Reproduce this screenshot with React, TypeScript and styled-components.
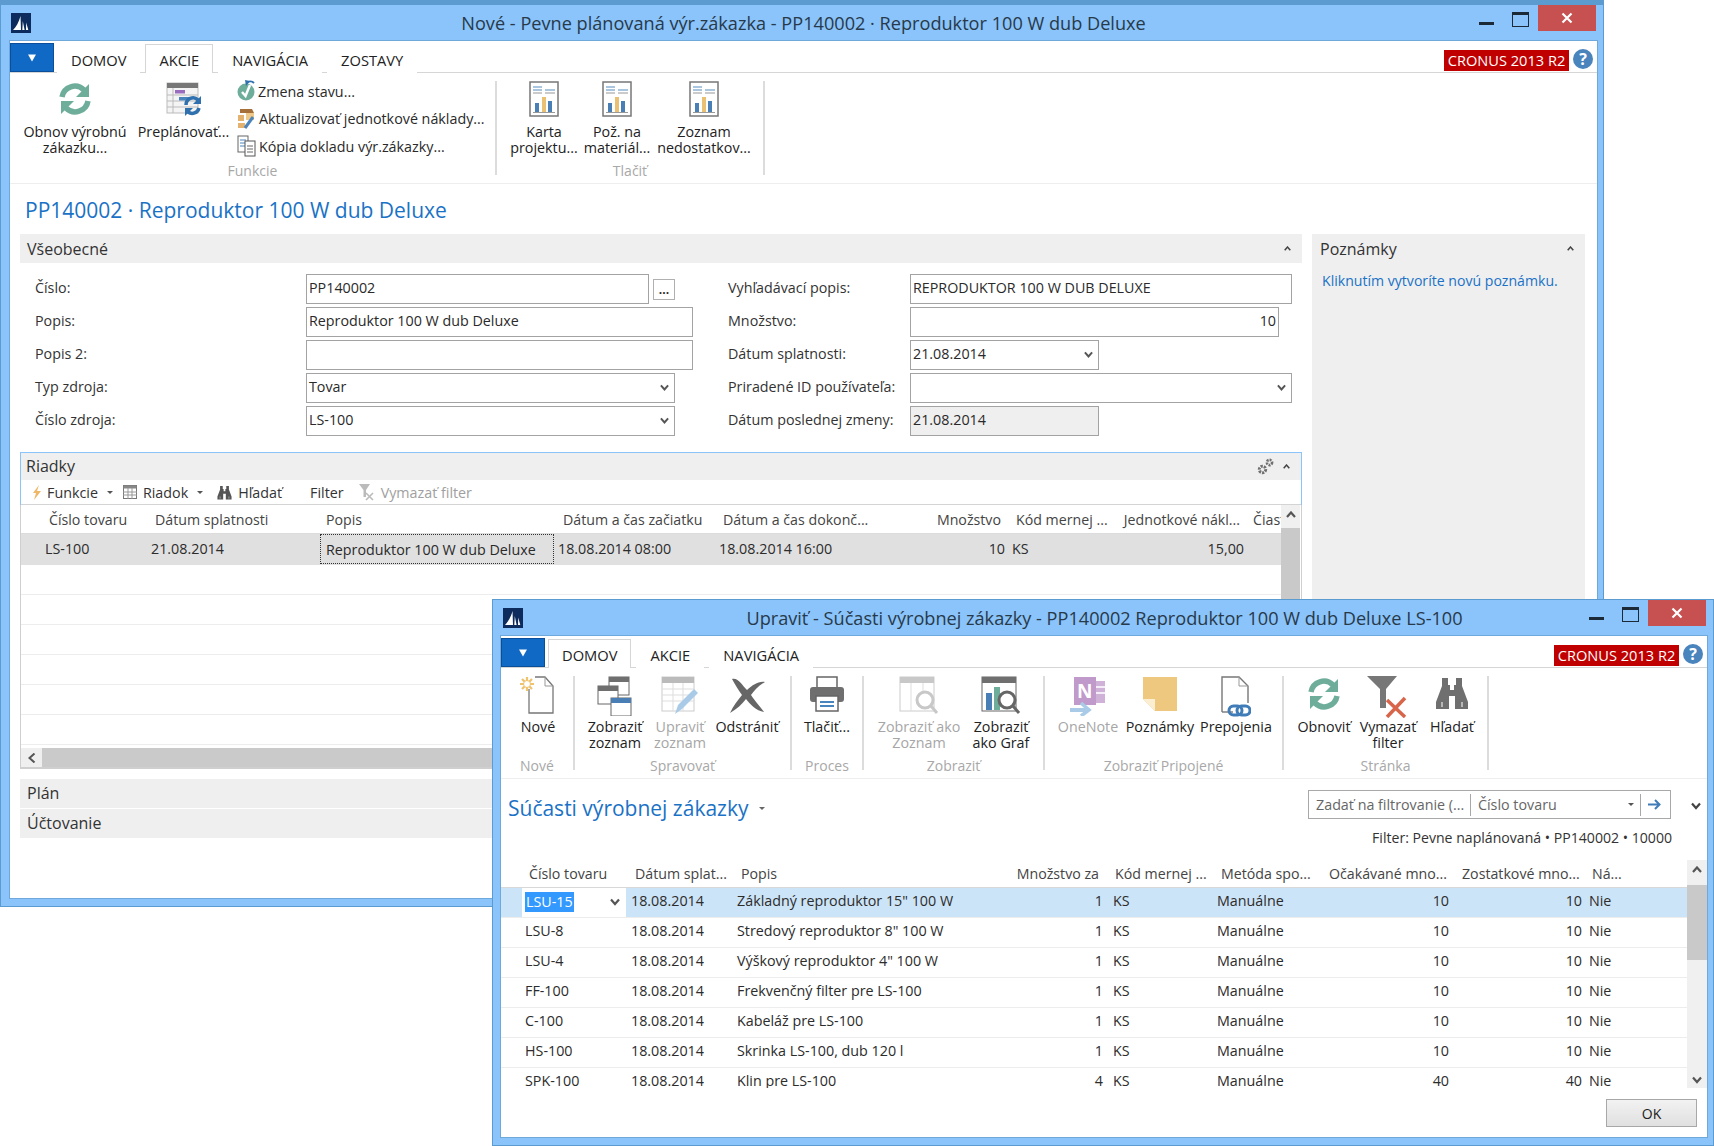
import React from "react";
import styled, { createGlobalStyle } from "styled-components";

const Global = createGlobalStyle`
  html, body { margin: 0; padding: 0; background: #fff; }
  body { font-family: "Open Sans", "Noto Sans", "Liberation Sans", sans-serif; font-size: 14px; color: #2a2a2a; }
`;

const FRAME = "#8ac4fa";
const EDGE = "#5b9bd0";
const LINK = "#1a72c6";
const PANEL = "#efefef";
const TEXT = "14.3px";

const Desktop = styled.div`
  position: relative;
  width: 1714px;
  height: 1146px;
  overflow: hidden;
  background: #fff;
`;

const Window = styled.div<{ $x: number; $y: number; $w: number; $h: number; $top: number }>`
  position: absolute;
  left: ${(p) => p.$x}px;
  top: ${(p) => p.$y}px;
  width: ${(p) => p.$w}px;
  height: ${(p) => p.$h}px;
  box-sizing: border-box;
  background: ${FRAME};
  border: 1px solid ${EDGE};
  border-top-width: ${(p) => p.$top}px;
  display: flex;
  flex-direction: column;
  padding-bottom: 8px;
`;

const TitleBar = styled.div`
  flex: none;
  height: 36px;
  display: grid;
  grid-template-columns: 1fr auto 1fr;
  padding: 0 7px 0 10px;
`;

const TitleLeft = styled.div`
  padding-top: 8px;
`;

const TitleText = styled.div`
  font-size: 18.15px;
  line-height: 36px;
  color: #28394a;
  white-space: nowrap;
`;

const Controls = styled.div`
  display: flex;
  justify-content: flex-end;
  align-items: flex-start;
`;

const MinBtn = styled.div`
  width: 15px;
  height: 3px;
  margin: 17px 18px 0 0;
  background: #1c2a38;
`;

const MaxBtn = styled.div`
  width: 15px;
  height: 11px;
  margin: 7px 9px 0 0;
  border: 1.5px solid #1c2a38;
  border-top-width: 3px;
`;

const CloseBtn = styled.div`
  width: 58px;
  height: 26px;
  background: #c75050;
  color: #fff;
  display: flex;
  align-items: center;
  justify-content: center;
`;

const Body = styled.div<{ $ml: number; $mr: number }>`
  flex: 1;
  min-height: 0;
  margin: 0 ${(p) => p.$mr}px 0 ${(p) => p.$ml}px;
  background: #fff;
  outline: 1px solid #6fa8da;
  display: flex;
  flex-direction: column;
  overflow: hidden;
`;

const TabRow = styled.div`
  flex: none;
  height: 32px;
  box-sizing: border-box;
  border-bottom: 1.5px solid #d6d6d6;
  display: flex;
  align-items: flex-end;
  gap: 5px;
  padding-right: 4px;
`;

const MenuButton = styled.div`
  width: 44px;
  height: 29px;
  margin-right: -2px;
  box-sizing: border-box;
  background: #1069c4;
  border: 1px solid #0b4f9a;
  display: flex;
  align-items: center;
  justify-content: center;
`;

const Tab = styled.div<{ $active?: boolean }>`
  height: 29px;
  box-sizing: border-box;
  padding: 0 13px;
  font-size: 14.7px;
  line-height: 30px;
  color: #222;
  background: #fff;
  border: 1px solid ${(p) => (p.$active ? "#d6d6d6" : "transparent")};
  border-bottom: 0;
  margin-bottom: -1px;
  white-space: nowrap;
`;

const Badge = styled.div`
  margin-left: auto;
  width: 125px;
  height: 21px;
  margin-bottom: 1px;
  background: #c00000;
  color: #fff;
  font-size: 14.6px;
  line-height: 21px;
  text-align: center;
  white-space: nowrap;
`;

const HelpDot = styled.div`
  width: 20px;
  height: 20px;
  margin: 0 0 3px -1px;
  border-radius: 50%;
  background: #4a84bd;
  color: #fff;
  font-weight: 700;
  font-size: 16px;
  line-height: 20px;
  text-align: center;
`;

const Ribbon = styled.div`
  flex: none;
  height: 111px;
  box-sizing: border-box;
  border-bottom: 1px solid #eeeeee;
  padding-top: 8px;
  display: flex;
  align-items: flex-start;
`;

const Group = styled.div<{ $w: number }>`
  width: ${(p) => p.$w}px;
  flex: none;
  display: flex;
  flex-direction: column;
  align-items: stretch;
`;

const GroupItems = styled.div<{ $pl?: number }>`
  height: 76px;
  display: flex;
  padding-left: ${(p) => p.$pl ?? 0}px;
`;

const GroupName = styled.div`
  margin-top: 6px;
  font-size: 14px;
  line-height: 16px;
  color: #a8a8a8;
  text-align: center;
`;

const Sep = styled.div`
  flex: none;
  width: 2px;
  height: 94px;
  background: #dcdcdc;
`;

const Item = styled.div<{ $w: number; $dim?: boolean }>`
  width: ${(p) => p.$w}px;
  flex: none;
  display: flex;
  flex-direction: column;
  align-items: center;
  color: ${(p) => (p.$dim ? "#a6a6a6" : "#222")};
`;

const ItemIcon = styled.div`
  height: 43px;
  display: flex;
  align-items: flex-start;
  justify-content: center;
`;

const ItemLabel = styled.div`
  font-size: ${TEXT};
  line-height: 16px;
  text-align: center;
  white-space: pre-line;
`;

const ActionStack = styled.div`
  display: flex;
  flex-direction: column;
  gap: 7.5px;
`;

const Action = styled.div`
  height: 20px;
  display: flex;
  align-items: center;
  gap: 2px;
  font-size: ${TEXT};
  white-space: nowrap;
`;

const PageTitle = styled.div<{ $pl: number }>`
  flex: none;
  height: 50px;
  box-sizing: border-box;
  padding: 1px 0 0 ${(p) => p.$pl}px;
  display: flex;
  align-items: center;
  font-size: 21px;
  color: ${LINK};
  white-space: nowrap;
`;

const Columns = styled.div`
  display: grid;
  grid-template-columns: 1282px 273px;
  column-gap: 10px;
  padding-left: 10px;
`;

const SectionHead = styled.div<{ $h?: number; $pl?: number }>`
  height: ${(p) => p.$h ?? 29}px;
  background: ${PANEL};
  padding: 0 11px 0 ${(p) => p.$pl ?? 7}px;
  display: flex;
  align-items: center;
  justify-content: space-between;
  font-size: 16px;
  color: #333;
`;

const RiadkyTitle = styled.span`
  margin-top: -2px;
`;

const HeadTools = styled.div`
  display: flex;
  align-items: center;
  gap: 9px;
`;

const Fields = styled.div`
  display: flex;
  padding-top: 11px;
  height: 162px;
`;

const FieldCol = styled.div<{ $w?: number; $pl?: number }>`
  width: ${(p) => (p.$w ? `${p.$w}px` : "auto")};
  padding-left: ${(p) => p.$pl ?? 0}px;
  box-sizing: border-box;
  display: flex;
  flex-direction: column;
  gap: 3px;
`;

const FieldRow = styled.div`
  display: flex;
  align-items: center;
  height: 30px;
`;

const FieldLabel = styled.div<{ $w: number }>`
  width: ${(p) => p.$w}px;
  flex: none;
  padding-bottom: 3px;
  font-size: ${TEXT};
  color: #333;
  white-space: nowrap;
`;

const Input = styled.div<{ $w: number; $right?: boolean; $off?: boolean }>`
  width: ${(p) => p.$w}px;
  height: 30px;
  box-sizing: border-box;
  border: 1px solid #a3a3a3;
  padding: 0 2px 3px;
  background: ${(p) => (p.$off ? PANEL : "#fff")};
  display: flex;
  align-items: center;
  justify-content: ${(p) => (p.$right ? "flex-end" : "space-between")};
  font-size: ${TEXT};
  white-space: nowrap;
`;

const DotsButton = styled.div`
  width: 22px;
  height: 21px;
  box-sizing: border-box;
  border: 1px solid #b0b0b0;
  margin-left: 4px;
  font-size: 12px;
  font-weight: 700;
  line-height: 20px;
  text-align: center;
`;

const NotesPanel = styled.div`
  background: ${PANEL};
  height: 600px;
`;

const NotesLink = styled.div`
  padding: 8px 0 0 10px;
  font-size: 14.1px;
  color: ${LINK};
  white-space: nowrap;
`;

const LinesPart = styled.div`
  margin-top: 16px;
  border: 1.5px solid ${FRAME};
  border-bottom: 0;
  box-sizing: border-box;
`;

const LinesBar = styled.div`
  height: 25px;
  box-sizing: border-box;
  border-bottom: 1px solid #d4d4d4;
  display: flex;
  align-items: center;
  gap: 8px;
  padding-left: 11px;
`;

const ToolItem = styled.div<{ $ml?: number; $dim?: boolean }>`
  margin-left: ${(p) => p.$ml ?? 0}px;
  display: flex;
  align-items: center;
  gap: 6px;
  font-size: ${TEXT};
  color: ${(p) => (p.$dim ? "#a0a0a0" : "#333")};
  white-space: nowrap;
`;

const Caret = styled.span`
  width: 0;
  height: 0;
  border: 3px solid transparent;
  border-top: 3px solid #555;
  margin: 3px 0 0 3px;
`;

const TableFrame = styled.div`
  height: 264px;
  box-sizing: border-box;
  border: 1px solid #cfcfcf;
  border-top: 0;
  border-bottom-width: 2px;
  display: flex;
  flex-direction: column;
  overflow: hidden;
`;

const TableTop = styled.div`
  flex: 1;
  min-height: 0;
  display: flex;
`;

const TableMain = styled.div<{ $w: number }>`
  width: ${(p) => p.$w}px;
  flex: none;
  overflow: hidden;
`;

const Row = styled.div<{ $cols: string; $h?: number; $bg?: string; $line?: string }>`
  display: grid;
  grid-template-columns: ${(p) => p.$cols};
  height: ${(p) => p.$h ?? 30}px;
  box-sizing: border-box;
  background: ${(p) => p.$bg ?? "#fff"};
  border-bottom: 1px solid ${(p) => p.$line ?? "#ededed"};
  align-items: center;
`;

const Cell = styled.div<{ $pl?: number; $right?: boolean }>`
  padding: 0 ${(p) => (p.$right ? 4 : 0)}px 2px ${(p) => p.$pl ?? 5}px;
  text-align: ${(p) => (p.$right ? "right" : "left")};
  font-size: ${TEXT};
  white-space: nowrap;
  color: #2c2c2c;
`;

const ListCell = styled(Cell)`
  padding-bottom: 4px;
`;

const HeadCell = styled.div<{ $pl?: number; $right?: boolean; $clip?: boolean }>`
  padding-left: ${(p) => (p.$pl ?? 5) + 4}px;
  padding-right: ${(p) => (p.$right ? 8 : 0)}px;
  text-align: ${(p) => (p.$right ? "right" : "left")};
  font-size: 14.2px;
  white-space: nowrap;
  overflow: ${(p) => (p.$clip ? "hidden" : "visible")};
  color: #444;
`;

const FocusCell = styled.div`
  align-self: stretch;
  margin-left: 3px;
  border: 1px dotted #333;
  padding-left: 5px;
  display: flex;
  align-items: center;
  font-size: ${TEXT};
  white-space: nowrap;
`;

const EditCell = styled.div`
  align-self: stretch;
  margin-left: 2px;
  padding: 0 6px 2px 3px;
  background: #fff;
  display: flex;
  align-items: center;
  justify-content: space-between;
`;

const Selected = styled.span`
  background: #3399ff;
  color: #fff;
  font-size: ${TEXT};
  line-height: 20px;
  padding: 0 1px;
`;

const VScroll = styled.div<{ $w: number; $top: number; $thumb: number }>`
  width: ${(p) => p.$w}px;
  flex: none;
  position: relative;
  background: #f0f0f0;
  &::after {
    content: "";
    position: absolute;
    left: 0;
    right: 0;
    top: ${(p) => p.$top}px;
    height: ${(p) => p.$thumb}px;
    background: #c9c9c9;
  }
`;

const ScrollArrow = styled.div<{ $bottom?: boolean }>`
  position: absolute;
  left: 0;
  right: 0;
  ${(p) => (p.$bottom ? "bottom: 4px;" : "top: 6px;")}
  display: flex;
  justify-content: center;
`;

const HScroll = styled.div`
  flex: none;
  height: 19px;
  display: flex;
  background: #cacaca;
`;

const HScrollBtn = styled.div`
  width: 21px;
  background: ${PANEL};
  display: flex;
  align-items: center;
  justify-content: center;
`;

const Collapsed = styled.div<{ $first?: boolean }>`
  margin-top: ${(p) => (p.$first ? 10 : 1)}px;
  height: 29px;
  box-sizing: border-box;
  background: ${PANEL};
  padding: 0 0 2px 7px;
  display: flex;
  align-items: center;
  font-size: 16px;
  color: #333;
`;

const ListTop = styled.div`
  flex: none;
  height: 29px;
  margin-top: 11px;
  display: flex;
  align-items: center;
`;

const ListTitle = styled.div`
  margin-left: 7px;
  padding-top: 7px;
  width: 800px;
  font-size: 21px;
  color: ${LINK};
  display: flex;
  align-items: center;
  gap: 10px;
  white-space: nowrap;
`;

const TitleCaret = styled.span`
  width: 0;
  height: 0;
  border: 3px solid transparent;
  border-top: 3px solid #666;
  margin-top: 4px;
`;

const FilterBox = styled.div`
  width: 363px;
  height: 29px;
  box-sizing: border-box;
  border: 1px solid #a8a8a8;
  display: flex;
  align-items: center;
  font-size: ${TEXT};
  color: #666;
  white-space: nowrap;
`;

const FilterPart = styled.div<{ $w: number; $line?: boolean }>`
  width: ${(p) => p.$w}px;
  height: 22px;
  box-sizing: border-box;
  flex: none;
  padding: 0 6px 0 7px;
  border-right: ${(p) => (p.$line ? "1px solid #a8a8a8" : "0")};
  display: flex;
  align-items: center;
  justify-content: space-between;
`;

const FoldButton = styled.div`
  margin-left: 20px;
`;

const FilterNote = styled.div`
  flex: none;
  height: 20px;
  margin-top: 9px;
  padding-right: 35px;
  text-align: right;
  font-size: 14.1px;
  line-height: 20px;
  color: #333;
`;

const ListTable = styled.div`
  flex: none;
  height: 228px;
  margin-top: 12px;
  display: flex;
`;

const Footer = styled.div`
  flex: 1;
  display: flex;
  justify-content: flex-end;
  padding: 11px 10px 0 0;
`;

const OkButton = styled.div`
  width: 91px;
  height: 28px;
  box-sizing: border-box;
  border: 1px solid #a8a8a8;
  background: linear-gradient(#f2f2f2, #e0e0e0);
  font-size: 14px;
  line-height: 27px;
  text-align: center;
  color: #222;
`;

const ChevronBox = styled.span`
  display: flex;
  margin: 3px 3px 0 0;
`;

/* ---------- icons ---------- */

const Logo = () => (
  <svg width="20" height="20" viewBox="0 0 20 20">
    <rect width="20" height="20" fill="#0d2b5c" />
    <path d="M2 17 C5 14 8 9 9.5 3 L10 17 Z" fill="#fff" />
    <path d="M11.3 17 L11.8 8 L13.6 17 Z M15 17 L15.2 9.5 L17.3 17 Z" fill="#fff" />
  </svg>
);

const CloseX = () => (
  <svg width="12" height="12" viewBox="0 0 12 12">
    <path d="M1.5 1.5 L10.5 10.5 M10.5 1.5 L1.5 10.5" stroke="#fff" strokeWidth="2.2" />
  </svg>
);

const Tri = () => (
  <svg width="10" height="8" viewBox="0 0 10 8">
    <path d="M1 0.5 H9 L5 7.5 Z" fill="#fff" />
  </svg>
);

const Chev = ({ dir = "down", c = "#555", s = 10 }: { dir?: "down" | "up" | "left"; c?: string; s?: number }) =>
  dir === "left" ? (
    <svg width="8" height="10" viewBox="0 0 8 10">
      <path d="M6.5 0.5 L1.5 5 L6.5 9.5" fill="none" stroke={c} strokeWidth="2" />
    </svg>
  ) : (
    <svg width={s} height={(s * 8) / 10} viewBox="0 0 10 8">
      <path d={dir === "down" ? "M1 1.5 L5 6 L9 1.5" : "M1 6 L5 1.5 L9 6"} fill="none" stroke={c} strokeWidth="2.2" />
    </svg>
  );

const Refresh = () => (
  <svg width="36" height="36" viewBox="0 0 36 36">
    <g fill="#6fad9b">
      <path d="M5 16 A13 13 0 0 1 27 9" fill="none" stroke="#6fad9b" strokeWidth="5.5" />
      <polygon points="32,3 32,16 19,16" />
      <g transform="rotate(180 18 18)">
        <path d="M5 16 A13 13 0 0 1 27 9" fill="none" stroke="#6fad9b" strokeWidth="5.5" />
        <polygon points="32,3 32,16 19,16" />
      </g>
    </g>
  </svg>
);

const Replan = () => (
  <svg width="36" height="36" viewBox="0 0 36 36">
    <rect x="1" y="2" width="31" height="30" fill="#f4f4f4" stroke="#bbb" />
    <rect x="1" y="2" width="31" height="5" fill="#777" />
    <path d="M1 14 H32 M1 20 H32 M1 26 H32 M7 7 V32" stroke="#bbb" />
    <rect x="9" y="9" width="10" height="3.5" fill="#9a6cc0" />
    <rect x="13" y="16" width="11" height="3.5" fill="#4a84bd" />
    <path d="M20 24 A7 7 0 0 1 32 19" fill="none" stroke="#2f70ae" strokeWidth="3.5" />
    <polygon points="35,15 35,23 27,23" fill="#2f70ae" />
    <path d="M33 27 A7 7 0 0 1 22 31" fill="none" stroke="#2f70ae" strokeWidth="3.5" />
    <polygon points="19,35 19,27 27,27" fill="#2f70ae" />
  </svg>
);

const StatusIc = () => (
  <svg width="19" height="22" viewBox="0 0 19 22">
    <circle cx="9" cy="12" r="8.5" fill="#6fad9b" />
    <path d="M5 12 L8.5 16 L13 5" fill="none" stroke="#fff" strokeWidth="2.5" />
    <path d="M10 3 A5 5 0 0 1 17 3" fill="none" stroke="#2f70ae" strokeWidth="2" />
    <polygon points="8,0 13,1 9,6" fill="#2f70ae" />
  </svg>
);

const CostIc = () => (
  <svg width="20" height="22" viewBox="0 0 20 22">
    <path d="M3 1 H15 L17 5 H3 Z" fill="#a5703a" />
    <rect x="1" y="7" width="6" height="6" fill="#e3b26f" />
    <rect x="9" y="5" width="8" height="7" fill="#efc98a" />
    <rect x="1" y="15" width="7" height="5" fill="#e3b26f" />
    <path d="M8 20 L16 9" stroke="#4a84bd" strokeWidth="3" />
  </svg>
);

const CopyIc = () => (
  <svg width="20" height="22" viewBox="0 0 20 22">
    <rect x="1" y="1" width="10" height="16" fill="#fff" stroke="#666" />
    <path d="M3 5 H9 M3 8 H9 M3 11 H9" stroke="#4a84bd" />
    <rect x="8" y="6" width="10" height="15" fill="#fff" stroke="#555" />
    <path d="M10 11 H16 M10 14 H16 M10 17 H16" stroke="#666" />
  </svg>
);

const ReportIc = () => (
  <svg width="30" height="36" viewBox="0 0 30 36">
    <rect x="1" y="1" width="28" height="34" fill="#fff" stroke="#777" strokeWidth="1.5" />
    <path d="M4 6 H13 M4 9 H13 M16 9 H26" stroke="#8fb3d3" strokeWidth="1.5" />
    <path d="M4 12 H13 M16 12 H26" stroke="#bbb" strokeWidth="1.5" />
    <rect x="6" y="22" width="4" height="9" fill="#4a7fb5" />
    <rect x="13" y="16" width="4" height="15" fill="#eac173" />
    <rect x="19" y="20" width="4" height="11" fill="#4a7fb5" />
    <path d="M4 31.5 H26" stroke="#999" />
  </svg>
);

const NewIc = () => (
  <svg width="36" height="38" viewBox="0 0 36 38">
    <path d="M9 13 V37 H33 V10 L25 1 H15" fill="#fff" stroke="#777" strokeWidth="1.3" />
    <path d="M25 1 V10 H33" fill="none" stroke="#999" />
    <g stroke="#efc26c" strokeWidth="2.2">
      <path d="M7 1 V15 M0 8 H14 M2 3 L12 13 M12 3 L2 13" />
    </g>
    <circle cx="7" cy="8" r="3.5" fill="#fff" stroke="#efc26c" />
  </svg>
);

const MiniWin = ({ x, y, c }: { x: number; y: number; c: string }) => (
  <g>
    <rect x={x} y={y} width="20" height="18" fill="#fff" stroke="#666" />
    <rect x={x} y={y} width="20" height="5" fill={c} />
  </g>
);

const ListsIc = () => (
  <svg width="36" height="40" viewBox="0 0 36 40">
    <MiniWin x={12} y={1} c="#6f6f6f" />
    <MiniWin x={1} y={10} c="#6f6f6f" />
    <MiniWin x={14} y={22} c="#4a7fb5" />
  </svg>
);

const EditListIc = () => (
  <svg width="38" height="40" viewBox="0 0 38 40">
    <rect x="1" y="1" width="32" height="34" fill="#fff" stroke="#ccc" />
    <rect x="1" y="1" width="32" height="6" fill="#bbb" />
    <path d="M1 13 H33 M1 19 H33 M1 25 H33 M12 7 V35 M22 7 V35" stroke="#ddd" />
    <path d="M14 38 L17 29 L33 13 L37 17 L21 33 Z" fill="#a9cbe8" />
  </svg>
);

const DeleteIc = () => (
  <svg width="38" height="38" viewBox="0 0 38 38">
    <path d="M4 3 C10 1 14 9 19 14 C25 9 30 5 37 6 C30 10 26 15 23 19 C27 25 31 29 36 36 C28 35 22 28 18 23 C14 28 9 33 2 37 C5 30 10 24 14 19 C10 14 7 8 4 3 Z" fill="#666" />
  </svg>
);

const PrintIc = () => (
  <svg width="36" height="36" viewBox="0 0 36 36">
    <rect x="8" y="1" width="20" height="14" fill="#fff" stroke="#666" strokeWidth="1.5" />
    <rect x="1" y="11" width="34" height="15" rx="3" fill="#6f6f6f" />
    <rect x="7" y="20" width="22" height="15" fill="#fff" stroke="#666" strokeWidth="1.5" />
    <path d="M11 26 H25 M11 30 H25" stroke="#4a84bd" strokeWidth="2" />
  </svg>
);

const ViewListIc = () => (
  <svg width="40" height="40" viewBox="0 0 40 40">
    <rect x="1" y="1" width="34" height="34" fill="#fff" stroke="#ccc" />
    <rect x="1" y="1" width="34" height="6" fill="#c8c8c8" />
    <path d="M12 7 V35 M24 7 V20" stroke="#ddd" />
    <circle cx="26" cy="24" r="8" fill="#fff" stroke="#c8c8c8" strokeWidth="3" />
    <path d="M32 30 L38 37" stroke="#c8c8c8" strokeWidth="3" />
  </svg>
);

const ViewChartIc = () => (
  <svg width="40" height="40" viewBox="0 0 40 40">
    <rect x="1" y="1" width="34" height="34" fill="#fff" stroke="#666" />
    <rect x="1" y="1" width="34" height="6" fill="#6f6f6f" />
    <rect x="5" y="17" width="6" height="17" fill="#4a7fb5" />
    <rect x="13" y="11" width="6" height="23" fill="#6fad9b" />
    <circle cx="26" cy="24" r="8" fill="#fff" stroke="#666" strokeWidth="3" />
    <path d="M32 30 L38 37" stroke="#666" strokeWidth="3" />
  </svg>
);

const OneNoteIc = () => (
  <svg width="36" height="40" viewBox="0 0 36 40">
    <rect x="4" y="1" width="22" height="28" fill="#c09acb" />
    <rect x="26" y="5" width="9" height="22" fill="#d0b2d8" />
    <path d="M26 11 H35 M26 17 H35" stroke="#fff" strokeWidth="1.5" />
    <text x="7" y="22" fontFamily="'Open Sans', sans-serif" fontSize="19" fontWeight="700" fill="#fff">N</text>
    <path d="M0 34 H16" stroke="#a9cbe8" strokeWidth="4" />
    <path d="M11 27 L19 34 L11 40" fill="none" stroke="#a9cbe8" strokeWidth="3.5" />
  </svg>
);

const NoteIc = () => (
  <svg width="36" height="36" viewBox="0 0 36 36">
    <path d="M1 1 H35 V35 H13 L1 23 Z" fill="#edc87e" />
    <path d="M1 23 H13 V35 Z" fill="#fbeed1" />
  </svg>
);

const LinkIc = () => (
  <svg width="30" height="42" viewBox="0 0 30 42">
    <path d="M1 36 V1 H18 L27 10 V27" fill="#fff" stroke="#777" strokeWidth="1.4" />
    <path d="M18 1 V10 H27" fill="none" stroke="#999" />
    <path d="M12 36 H1" stroke="#777" strokeWidth="1.4" />
    <rect x="8" y="30" width="13" height="9" rx="4.5" fill="none" stroke="#3f7cb8" strokeWidth="3" />
    <rect x="16" y="30" width="13" height="9" rx="4.5" fill="none" stroke="#3f7cb8" strokeWidth="3" />
  </svg>
);

const ClearFilterIc = () => (
  <svg width="42" height="42" viewBox="0 0 42 42">
    <path d="M0 0 H30 L19 13 V32 H13 V13 Z" fill="#777" />
    <path d="M20 24 L38 41 M38 22 L20 41" stroke="#d8654a" strokeWidth="3.5" />
  </svg>
);

const BinoIc = ({ s = 34, c = "#6f6f6f" }: { s?: number; c?: string }) => (
  <svg width={s} height={s} viewBox="0 0 34 34">
    <path d="M7 2 H13 V9 H15 V14 H19 V9 H21 V2 H27 V10 L33 26 V33 H20 V20 H14 V33 H1 V26 L7 10 Z" fill={c} />
    <path d="M7 26 V31 M27 26 V31" stroke="#fff" strokeWidth="1" />
  </svg>
);

const Bolt = () => (
  <svg width="9" height="15" viewBox="0 0 9 15">
    <path d="M7 0 L1 8 H4 L2 15 L9 6 H5 Z" fill="#efb768" />
  </svg>
);

const GridIc = () => (
  <svg width="14" height="14" viewBox="0 0 14 14">
    <rect x="0.5" y="0.5" width="13" height="13" fill="#fff" stroke="#777" />
    <rect x="0.5" y="0.5" width="13" height="3" fill="#888" />
    <path d="M0 7 H14 M0 10 H14 M5 3 V14 M9 3 V14" stroke="#999" />
  </svg>
);

const ClearSmall = () => (
  <svg width="16" height="17" viewBox="0 0 16 17">
    <path d="M0 0 H11 L7 6 V13 H4.5 V6 Z" fill="#bbb" />
    <path d="M7 9 L14 16 M14 9 L7 16" stroke="#bbb" strokeWidth="1.6" />
  </svg>
);

const Gears = () => (
  <svg width="17" height="17" viewBox="0 0 17 17">
    <circle cx="5.5" cy="11.5" r="3.2" fill="#efefef" stroke="#707070" strokeWidth="3" strokeDasharray="2.2 1" />
    <circle cx="12.5" cy="4.5" r="2.6" fill="#efefef" stroke="#707070" strokeWidth="2.6" strokeDasharray="2 1" />
  </svg>
);

const ArrowRight = () => (
  <svg width="13" height="11" viewBox="0 0 13 11">
    <path d="M0 5.5 H11 M7 1 L11.5 5.5 L7 10" fill="none" stroke="#3f7cb8" strokeWidth="2" />
  </svg>
);

/* ---------- data ---------- */

const W1_COLS = "19px 106px 171px 237px 160px 136px 159px 91px 148px 33px";
const W2_COLS = "19px 106px 106px 269px 106px 105px 108px 133px 133px 101px";

const W2_ROWS = [
  ["LSU-15", "Základný reproduktor 15\" 100 W", "1"],
  ["LSU-8", "Stredový reproduktor 8\" 100 W", "1"],
  ["LSU-4", "Výškový reproduktor 4\" 100 W", "1"],
  ["FF-100", "Frekvenčný filter pre LS-100", "1"],
  ["C-100", "Kabeláž pre LS-100", "1"],
  ["HS-100", "Skrinka LS-100, dub 120 l", "1"],
  ["SPK-100", "Klin pre LS-100", "4"],
];

function Chevron() {
  return (
    <ChevronBox>
      <Chev s={9} />
    </ChevronBox>
  );
}

const FieldsLeft = () => (
  <FieldCol $w={708} $pl={15}>
    <FieldRow>
      <FieldLabel $w={271}>Číslo:</FieldLabel>
      <Input $w={343}>PP140002</Input>
      <DotsButton>...</DotsButton>
    </FieldRow>
    <FieldRow>
      <FieldLabel $w={271}>Popis:</FieldLabel>
      <Input $w={387}>Reproduktor 100 W dub Deluxe</Input>
    </FieldRow>
    <FieldRow>
      <FieldLabel $w={271}>Popis 2:</FieldLabel>
      <Input $w={387} />
    </FieldRow>
    <FieldRow>
      <FieldLabel $w={271}>Typ zdroja:</FieldLabel>
      <Input $w={369}>
        Tovar
        <Chevron />
      </Input>
    </FieldRow>
    <FieldRow>
      <FieldLabel $w={271}>Číslo zdroja:</FieldLabel>
      <Input $w={369}>
        LS-100
        <Chevron />
      </Input>
    </FieldRow>
  </FieldCol>
);

const FieldsRight = () => (
  <FieldCol>
    <FieldRow>
      <FieldLabel $w={182}>Vyhľadávací popis:</FieldLabel>
      <Input $w={382}>REPRODUKTOR 100 W DUB DELUXE</Input>
    </FieldRow>
    <FieldRow>
      <FieldLabel $w={182}>Množstvo:</FieldLabel>
      <Input $w={369} $right>10</Input>
    </FieldRow>
    <FieldRow>
      <FieldLabel $w={182}>Dátum splatnosti:</FieldLabel>
      <Input $w={189}>
        21.08.2014
        <Chevron />
      </Input>
    </FieldRow>
    <FieldRow>
      <FieldLabel $w={182}>Priradené ID používateľa:</FieldLabel>
      <Input $w={382}>
        <span />
        <Chevron />
      </Input>
    </FieldRow>
    <FieldRow>
      <FieldLabel $w={182}>Dátum poslednej zmeny:</FieldLabel>
      <Input $w={189} $off>21.08.2014</Input>
    </FieldRow>
  </FieldCol>
);

const LinesTable = () => (
  <TableFrame>
    <TableTop>
      <TableMain $w={1260}>
        <Row $cols={W1_COLS} $h={29} $line="#dcdcdc">
          <span />
          <HeadCell>Číslo tovaru</HeadCell>
          <HeadCell>Dátum splatnosti</HeadCell>
          <HeadCell>Popis</HeadCell>
          <HeadCell>Dátum a čas začiatku</HeadCell>
          <HeadCell>Dátum a čas dokonč...</HeadCell>
          <HeadCell $right>Množstvo</HeadCell>
          <HeadCell $pl={3}>Kód mernej ...</HeadCell>
          <HeadCell $right>Jednotkové nákl...</HeadCell>
          <HeadCell $pl={1} $clip>Čiastka</HeadCell>
        </Row>
        <Row $cols={W1_COLS} $h={31} $bg="#e0e0e0" $line="#e0e0e0">
          <span />
          <Cell>LS-100</Cell>
          <Cell>21.08.2014</Cell>
          <FocusCell>Reproduktor 100 W dub Deluxe</FocusCell>
          <Cell $pl={4}>18.08.2014 08:00</Cell>
          <Cell>18.08.2014 16:00</Cell>
          <Cell $right>10</Cell>
          <Cell $pl={3}>KS</Cell>
          <Cell $right>15,00</Cell>
          <span />
        </Row>
        {[0, 1, 2, 3, 4, 5].map((i) => (
          <Row key={i} $cols={W1_COLS} />
        ))}
      </TableMain>
      <VScroll $w={19} $top={23} $thumb={300}>
        <ScrollArrow>
          <Chev dir="up" />
        </ScrollArrow>
      </VScroll>
    </TableTop>
    <HScroll>
      <HScrollBtn>
        <Chev dir="left" />
      </HScrollBtn>
    </HScroll>
  </TableFrame>
);

export default function App() {
  return (
    <Desktop>
      <Global />

      <Window $x={0} $y={0} $w={1604} $h={907} $top={5}>
        <TitleBar>
          <TitleLeft>
            <Logo />
          </TitleLeft>
          <TitleText>Nové - Pevne plánovaná výr.zákazka - PP140002 · Reproduktor 100 W dub Deluxe</TitleText>
          <Controls>
            <MinBtn />
            <MaxBtn />
            <CloseBtn>
              <CloseX />
            </CloseBtn>
          </Controls>
        </TitleBar>
        <Body $ml={9} $mr={6}>
          <TabRow>
            <MenuButton>
              <Tri />
            </MenuButton>
            <Tab>DOMOV</Tab>
            <Tab $active>AKCIE</Tab>
            <Tab>NAVIGÁCIA</Tab>
            <Tab>ZOSTAVY</Tab>
            <Badge>CRONUS 2013 R2</Badge>
            <HelpDot>?</HelpDot>
          </TabRow>
          <Ribbon>
            <Group $w={485}>
              <GroupItems $pl={10}>
                <Item $w={110}>
                  <ItemIcon>
                    <Refresh />
                  </ItemIcon>
                  <ItemLabel>{"Obnov výrobnú\nzákazku..."}</ItemLabel>
                </Item>
                <Item $w={107}>
                  <ItemIcon>
                    <Replan />
                  </ItemIcon>
                  <ItemLabel>Preplánovať...</ItemLabel>
                </Item>
                <ActionStack>
                  <Action>
                    <StatusIc />
                    Zmena stavu...
                  </Action>
                  <Action>
                    <CostIc />
                    Aktualizovať jednotkové náklady...
                  </Action>
                  <Action>
                    <CopyIc />
                    Kópia dokladu výr.zákazky...
                  </Action>
                </ActionStack>
              </GroupItems>
              <GroupName>Funkcie</GroupName>
            </Group>
            <Sep />
            <Group $w={266}>
              <GroupItems $pl={12}>
                <Item $w={70}>
                  <ItemIcon>
                    <ReportIc />
                  </ItemIcon>
                  <ItemLabel>{"Karta\nprojektu..."}</ItemLabel>
                </Item>
                <Item $w={76}>
                  <ItemIcon>
                    <ReportIc />
                  </ItemIcon>
                  <ItemLabel>{"Pož. na\nmateriál..."}</ItemLabel>
                </Item>
                <Item $w={98}>
                  <ItemIcon>
                    <ReportIc />
                  </ItemIcon>
                  <ItemLabel>{"Zoznam\nnedostatkov..."}</ItemLabel>
                </Item>
              </GroupItems>
              <GroupName>Tlačiť</GroupName>
            </Group>
            <Sep />
          </Ribbon>
          <PageTitle $pl={15}>PP140002 · Reproduktor 100 W dub Deluxe</PageTitle>
          <Columns>
            <div>
              <SectionHead>
                Všeobecné
                <Chev dir="up" c="#444" s={7} />
              </SectionHead>
              <Fields>
                <FieldsLeft />
                <FieldsRight />
              </Fields>
              <LinesPart>
                <SectionHead $h={27} $pl={5}>
                  <RiadkyTitle>Riadky</RiadkyTitle>
                  <HeadTools>
                    <Gears />
                    <Chev dir="up" c="#444" s={7} />
                  </HeadTools>
                </SectionHead>
                <LinesBar>
                  <ToolItem>
                    <Bolt />
                    Funkcie
                    <Caret />
                  </ToolItem>
                  <ToolItem $ml={2}>
                    <GridIc />
                    Riadok
                    <Caret />
                  </ToolItem>
                  <ToolItem $ml={6}>
                    <BinoIc s={15} c="#555" />
                    Hľadať
                  </ToolItem>
                  <ToolItem $ml={20}>Filter</ToolItem>
                  <ToolItem $ml={7} $dim>
                    <ClearSmall />
                    Vymazať filter
                  </ToolItem>
                </LinesBar>
              </LinesPart>
              <LinesTable />
              <Collapsed $first>Plán</Collapsed>
              <Collapsed>Účtovanie</Collapsed>
            </div>
            <NotesPanel>
              <SectionHead $pl={8}>
                Poznámky
                <Chev dir="up" c="#444" s={7} />
              </SectionHead>
              <NotesLink>Kliknutím vytvoríte novú poznámku.</NotesLink>
            </NotesPanel>
          </Columns>
        </Body>
      </Window>

      <Window $x={492} $y={599} $w={1222} $h={547} $top={1}>
        <TitleBar>
          <TitleLeft>
            <Logo />
          </TitleLeft>
          <TitleText>Upraviť - Súčasti výrobnej zákazky - PP140002 Reproduktor 100 W dub Deluxe LS-100</TitleText>
          <Controls>
            <MinBtn />
            <MaxBtn />
            <CloseBtn>
              <CloseX />
            </CloseBtn>
          </Controls>
        </TitleBar>
        <Body $ml={8} $mr={6}>
          <TabRow>
            <MenuButton>
              <Tri />
            </MenuButton>
            <Tab $active>DOMOV</Tab>
            <Tab>AKCIE</Tab>
            <Tab>NAVIGÁCIA</Tab>
            <Badge>CRONUS 2013 R2</Badge>
            <HelpDot>?</HelpDot>
          </TabRow>
          <Ribbon>
            <Group $w={72}>
              <GroupItems $pl={7}>
                <Item $w={60}>
                  <ItemIcon>
                    <NewIc />
                  </ItemIcon>
                  <ItemLabel>Nové</ItemLabel>
                </Item>
              </GroupItems>
              <GroupName>Nové</GroupName>
            </Group>
            <Sep />
            <Group $w={215}>
              <GroupItems $pl={5}>
                <Item $w={70}>
                  <ItemIcon>
                    <ListsIc />
                  </ItemIcon>
                  <ItemLabel>{"Zobraziť\nzoznam"}</ItemLabel>
                </Item>
                <Item $w={60} $dim>
                  <ItemIcon>
                    <EditListIc />
                  </ItemIcon>
                  <ItemLabel>{"Upraviť\nzoznam"}</ItemLabel>
                </Item>
                <Item $w={74}>
                  <ItemIcon>
                    <DeleteIc />
                  </ItemIcon>
                  <ItemLabel>Odstrániť</ItemLabel>
                </Item>
              </GroupItems>
              <GroupName>Spravovať</GroupName>
            </Group>
            <Sep />
            <Group $w={70}>
              <GroupItems>
                <Item $w={70}>
                  <ItemIcon>
                    <PrintIc />
                  </ItemIcon>
                  <ItemLabel>Tlačiť...</ItemLabel>
                </Item>
              </GroupItems>
              <GroupName>Proces</GroupName>
            </Group>
            <Sep />
            <Group $w={179}>
              <GroupItems $pl={5}>
                <Item $w={100} $dim>
                  <ItemIcon>
                    <ViewListIc />
                  </ItemIcon>
                  <ItemLabel>{"Zobraziť ako\nZoznam"}</ItemLabel>
                </Item>
                <Item $w={64}>
                  <ItemIcon>
                    <ViewChartIc />
                  </ItemIcon>
                  <ItemLabel>{"Zobraziť\nako Graf"}</ItemLabel>
                </Item>
              </GroupItems>
              <GroupName>Zobraziť</GroupName>
            </Group>
            <Sep />
            <Group $w={237}>
              <GroupItems $pl={7}>
                <Item $w={72} $dim>
                  <ItemIcon>
                    <OneNoteIc />
                  </ItemIcon>
                  <ItemLabel>OneNote</ItemLabel>
                </Item>
                <Item $w={72}>
                  <ItemIcon>
                    <NoteIc />
                  </ItemIcon>
                  <ItemLabel>Poznámky</ItemLabel>
                </Item>
                <Item $w={80}>
                  <ItemIcon>
                    <LinkIc />
                  </ItemIcon>
                  <ItemLabel>Prepojenia</ItemLabel>
                </Item>
              </GroupItems>
              <GroupName>Zobraziť Pripojené</GroupName>
            </Group>
            <Sep />
            <Group $w={203}>
              <GroupItems $pl={5}>
                <Item $w={70}>
                  <ItemIcon>
                    <Refresh />
                  </ItemIcon>
                  <ItemLabel>Obnoviť</ItemLabel>
                </Item>
                <Item $w={58}>
                  <ItemIcon>
                    <ClearFilterIc />
                  </ItemIcon>
                  <ItemLabel>{"Vymazať\nfilter"}</ItemLabel>
                </Item>
                <Item $w={70}>
                  <ItemIcon>
                    <BinoIc />
                  </ItemIcon>
                  <ItemLabel>Hľadať</ItemLabel>
                </Item>
              </GroupItems>
              <GroupName>Stránka</GroupName>
            </Group>
            <Sep />
          </Ribbon>
          <ListTop>
            <ListTitle>
              Súčasti výrobnej zákazky
              <TitleCaret />
            </ListTitle>
            <FilterBox>
              <FilterPart $w={162} $line>Zadať na filtrovanie (...</FilterPart>
              <FilterPart $w={170} $line>
                Číslo tovaru
                <Caret />
              </FilterPart>
              <FilterPart $w={29}>
                <ArrowRight />
              </FilterPart>
            </FilterBox>
            <FoldButton>
              <Chev c="#444" />
            </FoldButton>
          </ListTop>
          <FilterNote>Filter: Pevne naplánovaná • PP140002 • 10000</FilterNote>
          <ListTable>
            <TableMain $w={1186}>
              <Row $cols={W2_COLS} $h={28} $line="#d8d8d8">
                <span />
                <HeadCell>Číslo tovaru</HeadCell>
                <HeadCell>Dátum splat...</HeadCell>
                <HeadCell>Popis</HeadCell>
                <HeadCell $right>Množstvo za</HeadCell>
                <HeadCell $pl={4}>Kód mernej ...</HeadCell>
                <HeadCell>Metóda spo...</HeadCell>
                <HeadCell $right>Očakávané mno...</HeadCell>
                <HeadCell $right>Zostatkové mno...</HeadCell>
                <HeadCell $pl={2}>Ná...</HeadCell>
              </Row>
              {W2_ROWS.map(([no, desc, qty], i) => (
                <Row key={no} $cols={W2_COLS} $bg={i === 0 ? "#cce4f7" : "#fff"}>
                  <span />
                  {i === 0 ? (
                    <EditCell>
                      <Selected>{no}</Selected>
                      <Chev />
                    </EditCell>
                  ) : (
                    <ListCell>{no}</ListCell>
                  )}
                  <ListCell>18.08.2014</ListCell>
                  <ListCell>{desc}</ListCell>
                  <ListCell $right>{qty}</ListCell>
                  <ListCell $pl={6}>KS</ListCell>
                  <ListCell>Manuálne</ListCell>
                  <ListCell $right>{qty === "4" ? "40" : "10"}</ListCell>
                  <ListCell $right>{qty === "4" ? "40" : "10"}</ListCell>
                  <ListCell $pl={3}>Nie</ListCell>
                </Row>
              ))}
            </TableMain>
            <VScroll $w={20} $top={25} $thumb={75}>
              <ScrollArrow>
                <Chev dir="up" />
              </ScrollArrow>
              <ScrollArrow $bottom>
                <Chev />
              </ScrollArrow>
            </VScroll>
          </ListTable>
          <Footer>
            <OkButton>OK</OkButton>
          </Footer>
        </Body>
      </Window>
    </Desktop>
  );
}
